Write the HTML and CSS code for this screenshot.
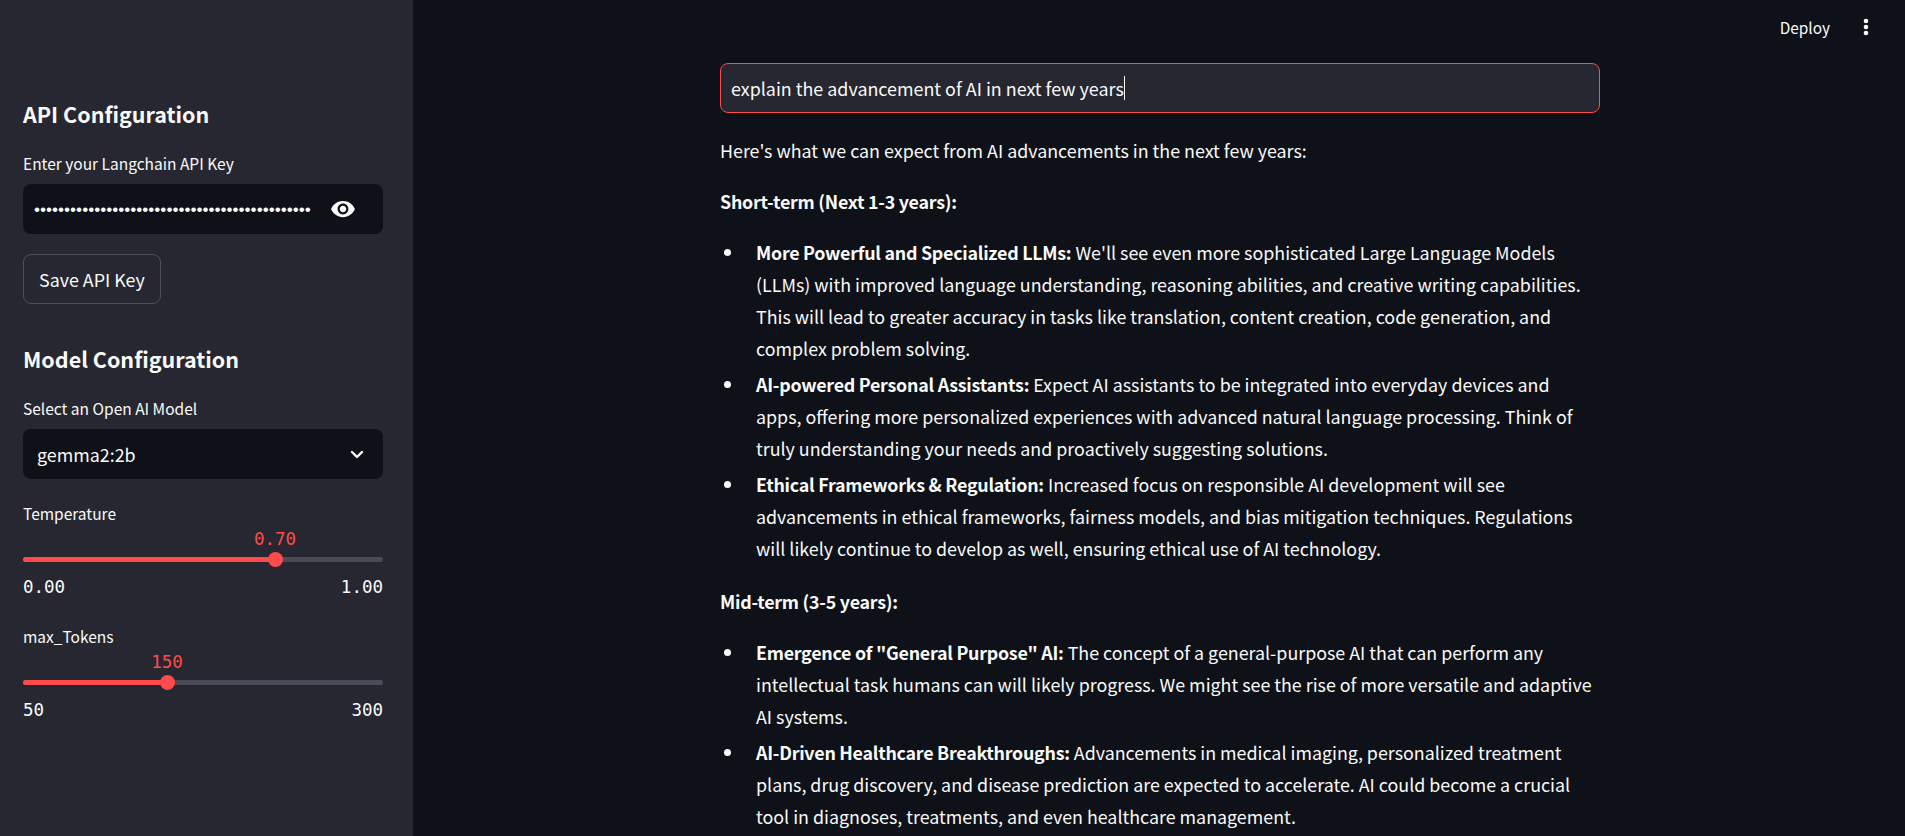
FILE: index.html
```html
<!DOCTYPE html>
<html lang="en">
<head>
  <meta charset="UTF-8">
  <title>Chatbot</title>
  <link rel="stylesheet" href="styles.css">
</head>
<body>
  <aside class="sidebar">
    <h2 class="side-title">API Configuration</h2>
    <div class="field-label">Enter your Langchain API Key</div>
    <div class="password">
      <span class="dots">••••••••••••••••••••••••••••••••••••••••••••••</span>
      <svg class="eye" viewBox="0 0 24 24" width="26" height="26"><path fill="#fafafa" d="M12 4.5C7 4.5 2.73 7.61 1 12c1.73 4.39 6 7.5 11 7.5s9.27-3.11 11-7.5c-1.73-4.39-6-7.5-11-7.5zM12 17c-2.76 0-5-2.24-5-5s2.24-5 5-5 5 2.24 5 5-2.24 5-5 5zm0-8c-1.66 0-3 1.34-3 3s1.34 3 3 3 3-1.34 3-3-1.34-3-3-3z"/></svg>
    </div>
    <button class="save-btn">Save API Key</button>
    <h2 class="side-title model-title">Model Configuration</h2>
    <div class="field-label">Select an Open AI Model</div>
    <div class="select">
      <span>gemma2:2b</span>
      <svg viewBox="0 0 24 24" width="24" height="24"><path fill="none" stroke="#fafafa" stroke-width="2.4" stroke-linecap="round" stroke-linejoin="round" d="M7 10l5 5 5-5"/></svg>
    </div>
    <div class="slider temp">
      <div class="slider-label">Temperature</div>
      <div class="track-area">
        <div class="thumb-value" style="left: 70%">0.70</div>
        <div class="track"><div class="fill" style="width: 70%"></div><div class="thumb" style="left: 70%"></div></div>
      </div>
      <div class="range"><span>0.00</span><span>1.00</span></div>
    </div>
    <div class="slider tokens">
      <div class="slider-label">max_Tokens</div>
      <div class="track-area">
        <div class="thumb-value" style="left: 40%">150</div>
        <div class="track"><div class="fill" style="width: 40%"></div><div class="thumb" style="left: 40%"></div></div>
      </div>
      <div class="range"><span>50</span><span>300</span></div>
    </div>
  </aside>

  <main class="main">
    <header class="topbar">
      <span class="deploy">Deploy</span>
      <svg class="menu" viewBox="0 0 24 24" width="24" height="24"><circle cx="12" cy="6" r="2.3" fill="#fafafa"/><circle cx="12" cy="12" r="2.3" fill="#fafafa"/><circle cx="12" cy="18" r="2.3" fill="#fafafa"/></svg>
    </header>
    <div class="content">
      <div class="prompt"><span>explain the advancement of AI in next few years</span><i class="caret"></i></div>
      <p>Here's what we can expect from AI advancements in the next few years:</p>
      <p><strong>Short-term (Next 1-3 years):</strong></p>
      <ul>
        <li><strong>More Powerful and Specialized LLMs:</strong> We'll see even more sophisticated Large Language Models (LLMs) with improved language understanding, reasoning abilities, and creative writing capabilities. This will lead to greater accuracy in tasks like translation, content creation, code generation, and complex problem solving.</li>
        <li><strong>AI-powered Personal Assistants:</strong> Expect AI assistants to be integrated into everyday devices and apps, offering more personalized experiences with advanced natural language processing. Think of truly understanding your needs and proactively suggesting solutions.</li>
        <li><strong>Ethical Frameworks &amp; Regulation:</strong> Increased focus on responsible AI development will see advancements in ethical frameworks, fairness models, and bias mitigation techniques. Regulations will likely continue to develop as well, ensuring ethical use of AI technology.</li>
      </ul>
      <p><strong>Mid-term (3-5 years):</strong></p>
      <ul>
        <li><strong>Emergence of "General Purpose" AI:</strong> The concept of a general-purpose AI that can perform any intellectual task humans can will likely progress. We might see the rise of more versatile and adaptive AI systems.</li>
        <li><strong>AI-Driven Healthcare Breakthroughs:</strong> Advancements in medical imaging, personalized treatment plans, drug discovery, and disease prediction are expected to accelerate. AI could become a crucial tool in diagnoses, treatments, and even healthcare management.</li>
      </ul>
    </div>
  </main>
</body>
</html>
```

FILE: styles.css
```css
* {
  box-sizing: border-box;
}

body {
  margin: 0;
  display: flex;
  height: 836px;
  overflow: hidden;
  background-color: #0e1117;
  color: #fafafa;
  font-family: "Noto Sans CJK SC", "Noto Sans", sans-serif;
  font-size: 17.85px;
}

.sidebar {
  width: 413px;
  flex-shrink: 0;
  padding: 96px 30px 0 23px;
  background-color: #262730;
}

.side-title {
  margin: 0;
  font-size: 21.5px;
  line-height: 36px;
  font-weight: 600;
}

.field-label {
  margin-top: 20px;
  padding-bottom: 2px;
  font-size: 15.5px;
  line-height: 22px;
}

.password, .select {
  display: flex;
  align-items: center;
  justify-content: space-between;
  height: 50px;
  margin-top: 8px;
  border-radius: 8px;
  background-color: #0e1117;
}

.password {
  padding: 0 27px 0 11px;
}

.dots {
  width: 278px;
  white-space: nowrap;
  font-family: "Liberation Sans", sans-serif;
  font-size: 17.2px;
  line-height: 24px;
}

.save-btn {
  display: block;
  height: 50px;
  width: 138px;
  margin-top: 20px;
  padding: 0;
  border: 1px solid #4d4f59;
  border-radius: 8px;
  background-color: #262730;
  color: #fafafa;
  font: inherit;
}

.model-title {
  margin-top: 37px;
}

.select {
  padding: 0 14px;
}

.slider-label {
  padding-bottom: 2px;
  font-size: 15.5px;
  line-height: 22px;
}

.temp {
  margin-top: 23px;
}

.tokens {
  margin-top: 26px;
}

.track-area {
  position: relative;
  height: 36px;
}

.thumb-value {
  position: absolute;
  top: 3px;
  transform: translateX(-50%);
  color: #ff4b4b;
  font-family: "DejaVu Sans Mono", monospace;
  font-size: 17.5px;
  line-height: 20px;
}

.track {
  position: absolute;
  left: 0;
  right: 0;
  bottom: 0;
  height: 5px;
  border-radius: 3px;
  background-color: #4a4b57;
}

.fill {
  height: 100%;
  border-radius: 3px;
  background-color: #ff4b4b;
}

.thumb {
  position: absolute;
  top: -5px;
  width: 15px;
  height: 15px;
  margin-left: -7.5px;
  border-radius: 50%;
  background-color: #ff4b4b;
}

.range {
  display: flex;
  justify-content: space-between;
  margin-top: 13px;
  font-family: "DejaVu Sans Mono", monospace;
  font-size: 17.5px;
  line-height: 24px;
}

.main {
  flex: 1;
  min-width: 0;
}

.topbar {
  display: flex;
  justify-content: flex-end;
  align-items: center;
  gap: 24px;
  height: 54px;
  padding-right: 27px;
  font-size: 15.4px;
}

.content {
  width: 880px;
  margin: 9px 0 0 307px;
  line-height: 32px;
}

.prompt {
  display: flex;
  align-items: center;
  height: 50px;
  margin-bottom: 21px;
  padding: 0 10px;
  border: 1px solid #ff4b4b;
  border-radius: 8px;
  background-color: #262730;
  font-size: 17.9px;
}

.caret {
  width: 1px;
  height: 24px;
  background-color: #fafafa;
}

p {
  margin: 0 0 19px;
}

strong {
  font-weight: 600;
  letter-spacing: -0.25px;
}

ul {
  margin: 0 0 21px;
  padding: 0 6px 0 36px;
  list-style: none;
}

li {
  position: relative;
}

li + li {
  margin-top: 4px;
}

li::before {
  content: "";
  position: absolute;
  left: -32px;
  top: 13px;
  width: 7px;
  height: 7px;
  border-radius: 50%;
  background-color: #fafafa;
}
```
